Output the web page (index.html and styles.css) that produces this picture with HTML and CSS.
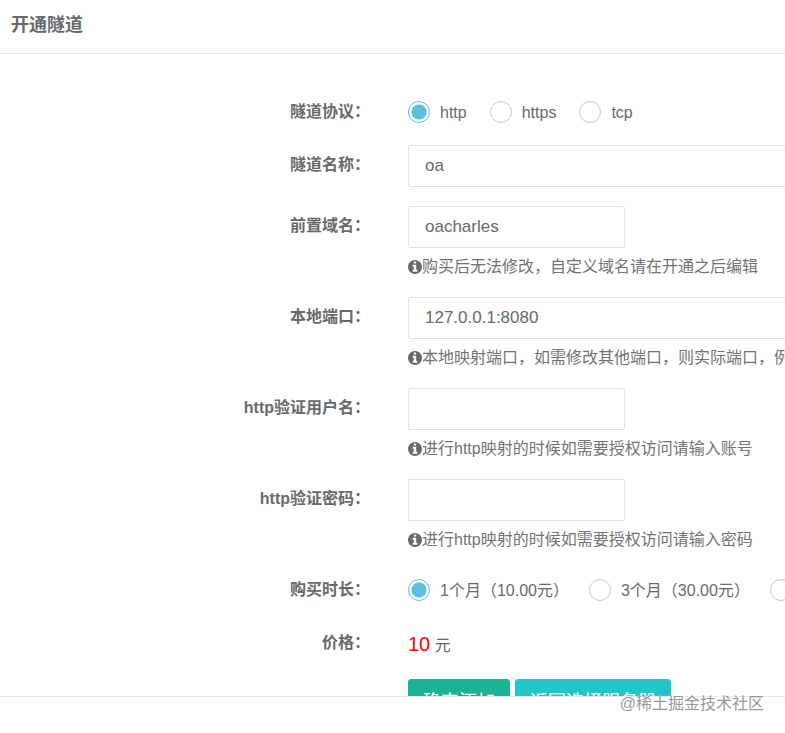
FILE: index.html
```html
<!DOCTYPE html>
<html lang="zh-CN">
<head>
  <meta charset="UTF-8" />
  <title>开通隧道</title>
  <link rel="stylesheet" href="styles.css">
</head>
<body>
  <svg class="sprite" aria-hidden="true">
    <symbol id="icon-info" viewBox="128 128 1536 1536">
      <path d="M1152 1376v-160q0-14-9-23t-23-9h-96v-512q0-14-9-23t-23-9h-320q-14 0-23 9t-9 23v160q0 14 9 23t23 9h96v320h-96q-14 0-23 9t-9 23v160q0 14 9 23t23 9h448q14 0 23-9t9-23zm-128-896v-160q0-14-9-23t-23-9h-192q-14 0-23 9t-9 23v160q0 14 9 23t23 9h192q14 0 23-9t9-23zm640 416q0 209-103 385.5t-279.5 279.5-385.5 103-385.5-103-279.5-279.5-103-385.5 103-385.5 279.5-279.5 385.5-103 385.5 103 279.5 279.5 103 385.5z"/>
    </symbol>
  </svg>

  <div class="panel">
    <header class="panel-title">
      <h5>开通隧道</h5>
    </header>

    <main class="panel-content">
      <form class="tunnel-form">
        <div class="form-group" role="radiogroup" aria-labelledby="protocol-label">
          <span class="control-label" id="protocol-label">隧道协议：</span>
          <div class="control radios">
            <label class="radio"><input type="radio" name="protocol" value="http" checked>http</label>
            <label class="radio"><input type="radio" name="protocol" value="https">https</label>
            <label class="radio"><input type="radio" name="protocol" value="tcp">tcp</label>
          </div>
        </div>

        <div class="form-group">
          <label class="control-label" for="name">隧道名称：</label>
          <div class="control">
            <input type="text" class="form-control" id="name" value="oa">
          </div>
        </div>

        <div class="form-group">
          <label class="control-label" for="domain">前置域名：</label>
          <div class="control">
            <input type="text" class="form-control short" id="domain" value="oacharles">
            <span class="help"><svg class="icon"><use href="#icon-info"/></svg>购买后无法修改，自定义域名请在开通之后编辑</span>
          </div>
        </div>

        <div class="form-group">
          <label class="control-label" for="port">本地端口：</label>
          <div class="control">
            <input type="text" class="form-control" id="port" value="127.0.0.1:8080">
            <span class="help"><svg class="icon"><use href="#icon-info"/></svg>本地映射端口，如需修改其他端口，则实际端口，例如</span>
          </div>
        </div>

        <div class="form-group">
          <label class="control-label" for="user">http验证用户名：</label>
          <div class="control">
            <input type="text" class="form-control short" id="user">
            <span class="help"><svg class="icon"><use href="#icon-info"/></svg>进行http映射的时候如需要授权访问请输入账号</span>
          </div>
        </div>

        <div class="form-group">
          <label class="control-label" for="pass">http验证密码：</label>
          <div class="control">
            <input type="password" class="form-control short" id="pass">
            <span class="help"><svg class="icon"><use href="#icon-info"/></svg>进行http映射的时候如需要授权访问请输入密码</span>
          </div>
        </div>

        <div class="form-group" role="radiogroup" aria-labelledby="time-label">
          <span class="control-label" id="time-label">购买时长：</span>
          <div class="control radios durations">
            <label class="radio"><input type="radio" name="time" value="1" checked>1个月（10.00元）</label>
            <label class="radio"><input type="radio" name="time" value="3">3个月（30.00元）</label>
            <label class="radio"><input type="radio" name="time" value="6">6个月（60.00元）</label>
          </div>
        </div>

        <div class="form-group">
          <span class="control-label">价格：</span>
          <div class="control price"><span class="amount">10</span> 元</div>
        </div>

        <div class="form-group">
          <span class="control-label"></span>
          <div class="control buttons">
            <button type="submit" class="btn btn-primary">确定添加</button>
            <button type="button" class="btn btn-info">返回选择服务器</button>
          </div>
        </div>
      </form>
    </main>

    <footer class="panel-footer">
      <span class="watermark">@稀土掘金技术社区</span>
    </footer>
  </div>
</body>
</html>
```

FILE: styles.css
```css
* {
  box-sizing: border-box;
}

body {
  margin: 0;
  background: #fff;
  color: #676a6c;
  font-family: "Liberation Sans", "Noto Sans CJK SC", sans-serif;
  font-size: 16px;
  line-height: 22px;
}

.sprite {
  display: none;
}

.panel {
  height: 100vh;
  display: flex;
  flex-direction: column;
  overflow: hidden;
}

.panel-title {
  padding: 14px 11px 17px;
  border-bottom: 1px solid #e7eaec;
}

.panel-title h5 {
  margin: 0;
  font-size: 18px;
  line-height: 22px;
}

.panel-content {
  flex: 1;
  min-height: 0;
  overflow: hidden;
}

/* the form is wider than a small window, the rest is cut off */
.tunnel-form {
  min-width: 1100px;
  padding-top: 38px;
  display: flex;
  flex-direction: column;
  gap: 19px;
}

.form-group {
  display: flex;
  gap: 38px;
}

.control-label {
  flex: 0 0 370px;
  padding-top: 9px;
  text-align: right;
  font-weight: bold;
}

.control {
  flex: 1;
  white-space: nowrap;
}

.form-control {
  display: block;
  width: 100%;
  height: 42px;
  padding: 6px 16px;
  border: 1px solid #e0e2e3;
  border-radius: 2px;
  background: #fff;
  color: inherit;
  font-family: inherit;
  font-size: 17px;
}

.form-control.short {
  width: 217px;
}

.help {
  display: flex;
  align-items: center;
  margin-top: 8px;
  color: #737373;
}

.icon {
  width: 14px;
  height: 14px;
  fill: #676a6c;
}

.radios {
  display: flex;
  gap: 23px;
  padding: 9px 0 3px;
}

.radios.durations {
  gap: 20px;
}

.radio {
  display: flex;
  gap: 10px;
  line-height: 24px;
  height: 22px;
}

.radio input {
  appearance: none;
  width: 22px;
  height: 22px;
  margin: 0;
  border: 1px solid #c8c8c8;
  border-radius: 50%;
  background: #fff;
}

.radio input:checked {
  border-color: #5bc0de;
  background: radial-gradient(circle, #5bc0de 7px, #fff 8px);
}

.price {
  padding-top: 7px;
  line-height: 28px;
}

.amount {
  color: #f00;
  font-size: 20px;
}

.buttons {
  display: flex;
  gap: 5px;
}

.btn {
  height: 42px;
  padding: 0 14px;
  border: 1px solid;
  border-radius: 3px;
  color: #fff;
  font-family: inherit;
  font-size: 18px;
  cursor: pointer;
}

.btn-primary {
  background: #1ab394;
  border-color: #1ab394;
}

.btn-info {
  background: #23c6c8;
  border-color: #23c6c8;
}

.panel-footer {
  position: relative;
  height: 37px;
  border-top: 1px solid #e7eaec;
}

.watermark {
  position: absolute;
  top: -4px;
  right: 21px;
  color: #999;
  text-shadow: 0 0 1px #fff;
}
```
